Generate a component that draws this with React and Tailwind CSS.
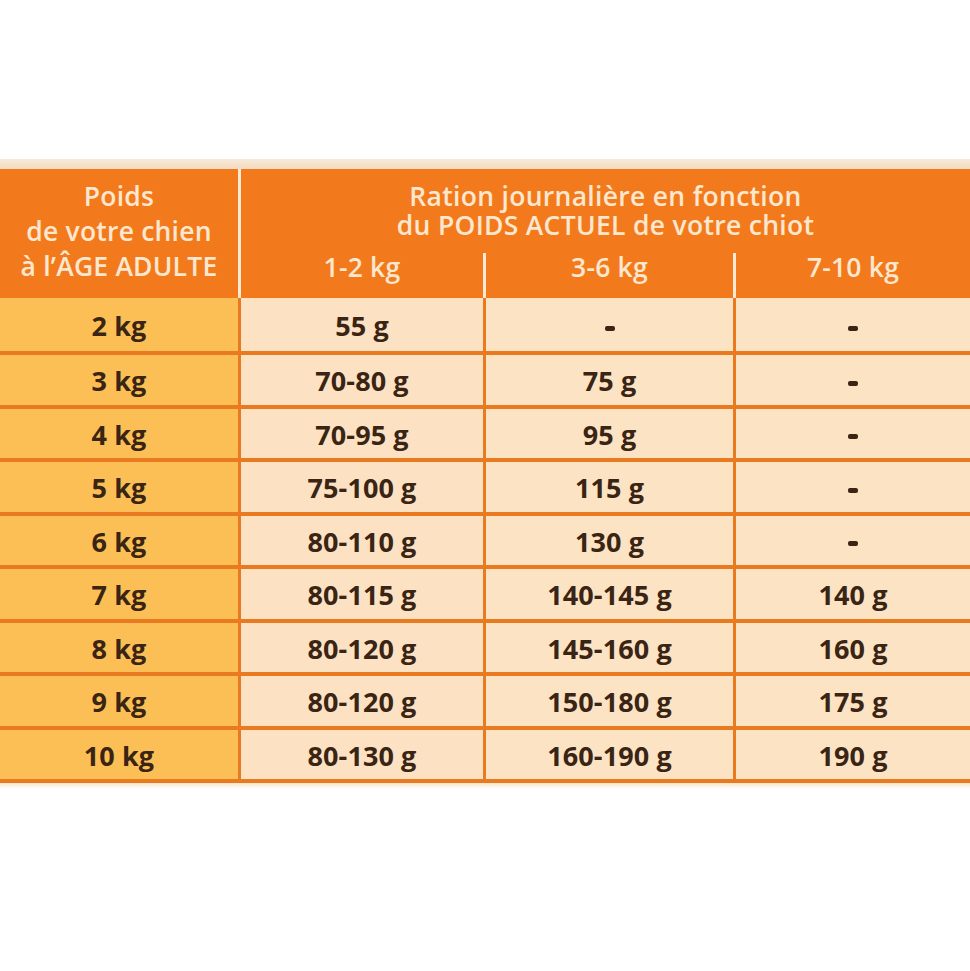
import React from "react";

const rows = [
  ["2 kg", "55 g", "-", "-"],
  ["3 kg", "70-80 g", "75 g", "-"],
  ["4 kg", "70-95 g", "95 g", "-"],
  ["5 kg", "75-100 g", "115 g", "-"],
  ["6 kg", "80-110 g", "130 g", "-"],
  ["7 kg", "80-115 g", "140-145 g", "140 g"],
  ["8 kg", "80-120 g", "145-160 g", "160 g"],
  ["9 kg", "80-120 g", "150-180 g", "175 g"],
  ["10 kg", "80-130 g", "160-190 g", "190 g"],
];

function Cell({ v }) {
  if (v === "-") {
    return <span className="block w-[10px] h-[5px] rounded-[2px] bg-[#3a2413] mt-[4px]" />;
  }
  return <span>{v}</span>;
}

export default function App() {
  return (
    <div
      className="w-[970px] h-[971px] bg-white flex flex-col overflow-hidden"
      style={{ fontFamily: "'Open Sans', Lato, sans-serif" }}
    >
      <div className="h-[159px] shrink-0" />
      <div className="h-[10px] shrink-0 bg-gradient-to-b from-[#f7ead9] to-[#f1dbc0]" />
      {/* Header */}
      <div className="flex h-[129px] shrink-0 bg-[#f37a1c] text-[#fde7cf]">
        <div className="w-[238px] flex flex-col items-center pt-[10px] text-[26.5px] leading-[35px] font-semibold tracking-[0.2px] whitespace-nowrap">
          <div>Poids</div>
          <div>de votre chien</div>
          <div>à l’ÂGE ADULTE</div>
        </div>
        <div className="w-[3px] bg-[#fde9d4]" />
        <div className="flex-1 flex flex-col">
          <div className="pt-[13px] flex flex-col items-center text-[26.5px] leading-[29px] font-semibold tracking-[0.3px] whitespace-nowrap">
            <div>Ration journalière en fonction</div>
            <div>du POIDS ACTUEL de votre chiot</div>
          </div>
          <div className="mt-[13px] flex h-[45px] text-[26.5px] leading-[29px] font-semibold tracking-[0.2px]">
            <div className="w-[242px] flex justify-center">1-2 kg</div>
            <div className="w-[3px] bg-[#fde9d4]" />
            <div className="w-[247px] flex justify-center">3-6 kg</div>
            <div className="w-[3px] bg-[#fde9d4]" />
            <div className="flex-1 flex justify-center">7-10 kg</div>
          </div>
        </div>
      </div>
      {/* Body */}
      <div className="flex flex-col shrink-0 text-[#3a2413] text-[27px] font-bold tracking-[0.1px]">
        {rows.map((r, i) => (
          <div
            key={i}
            className={`flex border-b-4 border-[#ea7a20] ${i === 0 ? "h-[57px]" : "h-[53.5px]"}`}
          >
            <div className="w-[238px] flex items-center justify-center bg-[#fcbf55] pt-[3px]">
              {r[0]}
            </div>
            <div className="w-[245px] border-l-[3px] border-[#ea7a20] flex items-center justify-center bg-[#fce2c2] pt-[3px]">
              <Cell v={r[1]} />
            </div>
            <div className="w-[250px] border-l-[3px] border-[#ea7a20] flex items-center justify-center bg-[#fce3c4] pt-[3px]">
              <Cell v={r[2]} />
            </div>
            <div className="flex-1 border-l-[3px] border-[#ea7a20] flex items-center justify-center bg-[#fce3c4] pt-[3px]">
              <Cell v={r[3]} />
            </div>
          </div>
        ))}
      </div>
      <div className="h-[6px] shrink-0 bg-gradient-to-b from-[#f7e3cc] to-white" />
    </div>
  );
}
